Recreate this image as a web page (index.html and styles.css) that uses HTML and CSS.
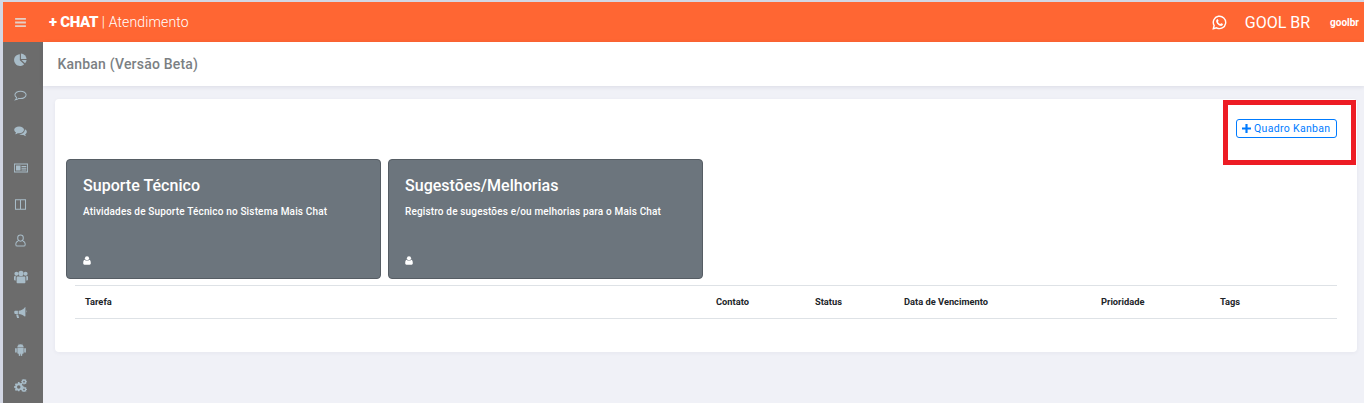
FILE: index.html
```html
<!DOCTYPE html>
<html lang="pt-BR">
<head>
<meta charset="utf-8">
<title>Kanban</title>
<link rel="stylesheet" href="styles.css">
</head>
<body>
<div class="app">
  <header class="topbar">
    <div class="burger-cell">
      <svg class="burger" viewBox="0 0 12 10"><path d="M0 0h12v2H0zM0 4h12v2H0zM0 8h12v2H0z"/></svg>
    </div>
    <div class="brand"><b class="brand-strong">+ CHAT</b> <span class="brand-sep">|</span> Atendimento</div>
    <div class="top-right">
      <svg class="wa" viewBox="0 0 16 16"><path fill="none" stroke="currentColor" stroke-width="1.5" d="M1.4 14.6l.9-3.4A6.6 6.6 0 1 1 4.9 13.7z"/><path fill="currentColor" d="M5.7 4.3c.3 0 .6 0 .7.4l.6 1.3c0 .2 0 .4-.5 1-.2.2-.2.4 0 .6.5.9 1.100 1.500 2 1.900.2.100.4.100.6-.1.500-.600.600-.700.900-.600l1.300.6c.3.200.4.300.3.700-.1.800-1 1.500-1.900 1.500-2.500-.2-5.100-2.700-5.300-5 0-.900.400-2 1.300-2.200z"/></svg>
      <span class="org">GOOL BR</span>
      <span class="user">goolbr</span>
    </div>
  </header>
  <div class="body-row">
    <nav class="sidebar">
      <svg class="ico" viewBox="0 0 14 14"><path d="M6.300 1.300v6.400l4.600 4.300A6.300 6.300 0 1 1 6.300 1.300z"/><path d="M7.500 0.500a6.300 6.300 0 0 1 6 6H7.500z"/><path d="M8 7.500h5.600a6 6 0 0 1-1.700 3.600z"/></svg>
      <svg class="ico" viewBox="0 0 14 14"><path fill="none" stroke="currentColor" stroke-width="1.100" d="M7 2.300c3.300 0 6 1.800 6 4s-2.700 4-6 4c-.7 0-1.300 0-1.900-.2-.9.8-2.200 1.400-3.600 1.500.7-.7 1.200-1.500 1.300-2.400C1.700 8.500 1 7.500 1 6.300c0-2.200 2.700-4 6-4z"/></svg>
      <svg class="ico" viewBox="0 0 14 14"><path d="M5.500 1.500c3 0 5.300 1.600 5.300 3.700S8.500 8.900 5.500 8.900c-.5 0-1 0-1.500-.1-.8.600-1.800 1-3 1.200.6-.6 1-1.200 1.200-1.900C1 7.400.2 6.400.2 5.200.2 3.100 2.500 1.500 5.500 1.500z"/><path d="M11.700 4.600c1.300.6 2.100 1.600 2.100 2.800 0 1.100-.7 2-1.800 2.700.2.700.6 1.300 1.200 1.900-1.200-.2-2.200-.6-3-1.200-1.700.3-3.500-.1-4.600-1 3.400 0 6.200-1.800 6.100-5.200z"/></svg>
      <svg class="ico ico-wide" viewBox="0 0 14 14"><path fill-rule="evenodd" d="M0 2.500h14v9H0zM.9 3.400v7.200h12.200V3.400z"/><path d="M2 4.500h4.500v5H2zM7.500 5h4.800v1H7.500zM7.500 6.700h4.800v1H7.500zM7.500 8.400h4.800v1H7.500z"/></svg>
      <svg class="ico" viewBox="0 0 14 14"><path fill="none" stroke="currentColor" stroke-width="1.100" d="M1.600 1.800h10.800v10.400H1.600zM7 1.800v10.400"/></svg>
      <svg class="ico" viewBox="0 0 14 14"><path fill="none" stroke="currentColor" stroke-width="1.100" d="M7 1.100a3 3 0 0 1 3 3v.6a3 3 0 0 1-6 0v-.6a3 3 0 0 1 3-3zM4.500 7.500C3 8 2 9 2 10.500v1a1.500 1.500 0 0 0 1.500 1.500h7a1.500 1.500 0 0 0 1.500-1.500v-1c0-1.500-1-2.500-2.500-3"/></svg>
      <svg class="ico ico-wide" viewBox="0 0 14 14"><circle cx="7" cy="3.400" r="2.600"/><circle cx="2.400" cy="3.700" r="2"/><circle cx="11.600" cy="3.700" r="2"/><path d="M3.800 6.400h6.400c.8 0 1.200.5 1.200 1.200v4.600c0 .7-.4 1.100-1.200 1.100H3.800c-.8 0-1.200-.4-1.200-1.100V7.600c0-.7.400-1.200 1.200-1.200zM0 6.300h2.300c-.4.500-.6 1-.6 1.500v2.600H.8c-.5 0-.8-.3-.8-.8zM14 6.300h-2.300c.4.500.6 1 .6 1.500v2.600h.9c.5 0 .8-.3.800-.8z"/></svg>
      <svg class="ico" viewBox="0 0 14 14"><path d="M12.300 1.200v9.900l-.8.300C9.700 9.600 7.600 8.800 5 8.700V5c2.600-.2 4.800-1.200 6.500-3.500zM13 4.600c.7.400.7 1.900 0 2.300zM1.200 5.100H4.200v3.500H1.200C.6 8.600.3 8.100.3 7.600V6.100c0-.6.300-1 .9-1zM2.300 9.100h2.200l1 3.800H3.300z"/></svg>
      <svg class="ico" viewBox="0 0 14 14"><path d="M3.600 4.800h6.800c0-1.300-.6-2.300-1.600-2.900l.6-1-.3-.2-.6 1a4 4 0 0 0-3 0l-.6-1-.3.200.6 1c-1 .6-1.600 1.600-1.600 2.900zM3.600 5.400h6.800v5.300c0 .5-.3.800-.8.800h-.7v1.700a.8.800 0 0 1-1.600 0v-1.700H6.700v1.700a.8.800 0 0 1-1.600 0v-1.700h-.7c-.5 0-.8-.3-.8-.8zM2.100 5.400c.5 0 .9.400.9.900v3.200a.9.900 0 0 1-1.800 0V6.300c0-.5.400-.9.900-.9zM11.900 5.400c.5 0 .9.400.9.900v3.200a.9.900 0 0 1-1.800 0V6.300c0-.5.400-.9.900-.9z"/></svg>
      <svg class="ico" viewBox="0 0 14 14"><path fill-rule="evenodd" d="M4.300 3.200h1.600l.3 1.200.8.300 1.100-.6 1.100 1.100-.6 1.100.3.800 1.200.3v1.600l-1.200.3-.3.800.6 1.100-1.100 1.100-1.100-.6-.8.3-.3 1.200H4.300L4 12.500l-.8-.3-1.100.6L1 11.700l.6-1.100-.3-.8-1.200-.3V7.900l1.200-.3.3-.8L1 5.700l1.100-1.100 1.100.6.800-.3zM5.100 6.800a1.900 1.900 0 1 0 0 3.800 1.900 1.900 0 0 0 0-3.800z"/><path fill-rule="evenodd" d="M11.200 0l.3.800.6.100.6-.5.7.6-.4.700.2.600.8.200v.9l-.8.200-.2.600.4.700-.7.600-.6-.5-.6.100-.3.800h-.9l-.2-.8-.6-.2-.6.400-.7-.6.400-.7-.2-.6-.8-.2V2.500l.8-.2.200-.6-.4-.7.700-.6.600.4.600-.2.200-.6zM10.800 2a.9.900 0 1 0 0 1.800.9.900 0 0 0 0-1.800z"/><path fill-rule="evenodd" d="M11.200 8.300l.3.800.6.100.6-.5.7.6-.4.700.2.600.8.200v.9l-.8.200-.2.600.4.700-.7.600-.6-.5-.6.100-.3.800h-.9l-.2-.8-.6-.2-.6.400-.7-.6.400-.7-.2-.6-.8-.2v-.9l.8-.2.200-.6-.4-.7.700-.6.600.4.600-.2.200-.6zm-.4 2a.9.900 0 1 0 0 1.800.9.900 0 0 0 0-1.800z"/></svg>
    </nav>
    <main class="main">
      <div class="page-title"><h1 class="page-heading">Kanban (Versão Beta)</h1></div>
      <section class="panel">
        <div class="toolbar">
          <button class="btn-add" type="button"><svg class="plus" viewBox="0 0 10 10"><path d="M3.800 0h2.400v3.800H10v2.400H6.200V10H3.800V6.200H0V3.800h3.800z"/></svg>Quadro Kanban</button>
        </div>
        <div class="boards">
          <article class="board">
            <h2 class="board-title">Suporte Técnico</h2>
            <p class="board-desc">Atividades de Suporte Técnico no Sistema Mais Chat</p>
            <svg class="board-user" viewBox="0 0 10 11"><circle cx="5" cy="2.800" r="2.600"/><path d="M2 4.700c.7.800 1.800 1.200 3 1.200s2.300-.4 3-1.200c1 .4 1.700 1.500 1.700 3.300v1.300c0 .8-.6 1.400-1.400 1.400H1.700C.9 10.700.300 10.100.300 9.300V8c0-1.800.7-2.900 1.700-3.300z"/></svg>
          </article>
          <article class="board">
            <h2 class="board-title">Sugestões/Melhorias</h2>
            <p class="board-desc">Registro de sugestões e/ou melhorias para o Mais Chat</p>
            <svg class="board-user" viewBox="0 0 10 11"><circle cx="5" cy="2.800" r="2.600"/><path d="M2 4.700c.7.800 1.800 1.200 3 1.200s2.300-.4 3-1.200c1 .4 1.700 1.500 1.700 3.300v1.300c0 .8-.6 1.400-1.400 1.400H1.700C.9 10.700.300 10.100.300 9.300V8c0-1.800.7-2.900 1.700-3.300z"/></svg>
          </article>
        </div>
        <div class="task-head">
          <span>Tarefa</span><span>Contato</span><span>Status</span><span>Data de Vencimento</span><span>Prioridade</span><span>Tags</span>
        </div>
        <div class="annotation"></div>
      </section>
    </main>
  </div>
</div>
</body>
</html>
```
FILE: styles.css
```css
* { box-sizing: border-box; }
html, body { margin: 0; height: 100%; overflow: hidden; }
body {
  background: #d3d7e4;
  font-family: Roboto, "Liberation Sans", sans-serif;
  padding: 2px 0 0 3px;
}
.app { display: flex; flex-direction: column; height: 401px; }
.topbar {
  display: flex;
  align-items: center;
  height: 40px;
  flex: none;
  background: #ff6633;
  color: #fff;
}
.burger-cell { width: 40px; display: flex; justify-content: center; flex: none; padding-right: 5px; }
.burger { width: 11px; height: 9px; fill: #e6cfc6; }
.brand { margin-left: 6px; font-size: 14px; font-weight: 300; letter-spacing: 0.15px; white-space: pre; }
.brand-strong { font-size: 15px; font-weight: 900; letter-spacing: -0.3px; }
.brand-sep { font-weight: 300; }
.top-right { margin-left: auto; display: flex; align-items: center; padding-right: 5px; }
.wa { width: 15px; height: 15px; color: #fff; margin-right: 18px; }
.org { font-size: 16px; font-weight: 400; margin-right: 20px; }
.user { font-size: 10px; font-weight: 700; }
.body-row { display: flex; flex: 1; min-height: 0; }
.sidebar {
  width: 40px;
  flex: none;
  background: #6c6c6c;
  display: flex;
  flex-direction: column;
  align-items: center;
  padding: 11px 5px 0 0;
  gap: 23.2px;
  overflow: hidden;
  color: #a8bcc8;
}
.ico { width: 13px; height: 13px; flex: none; fill: #a8bcc8; }
.ico-wide { width: 14px; height: 14px; margin: -0.5px 0; }
.main { flex: 1; min-width: 0; background: #f0f1f7; display: flex; flex-direction: column; }
.page-title {
  height: 44px;
  flex: none;
  background: #fff;
  box-shadow: 0 1px 4px rgba(40, 40, 80, 0.1);
  display: flex;
  align-items: center;
  padding-left: 14.5px;
}
.page-heading { margin: 0; font-size: 14px; font-weight: 500; color: #7b7f83; letter-spacing: 0.2px; }
.panel {
  position: relative;
  margin: 13px 7px 0 12px;
  height: 253px;
  background: #fff;
  border-radius: 4px;
  box-shadow: 0 1px 4px rgba(40, 40, 80, 0.05);
  padding: 0 20px 0 11px;
}
.toolbar { display: flex; justify-content: flex-end; padding-top: 20px; height: 60px; }
.btn-add {
  display: flex;
  align-items: center;
  height: 19px;
  width: 101px;
  padding: 0 0 0 5px;
  background: #fff;
  border: 1px solid #007bff;
  border-radius: 3px;
  color: #007bff;
  font: 400 10.5px Roboto, sans-serif;
  letter-spacing: 0.33px;
  white-space: nowrap;
}
.plus { width: 9px; height: 9px; fill: #007bff; margin-right: 3px; flex: none; }
.boards { display: flex; gap: 7px; }
.board {
  width: 315px;
  height: 120px;
  background: #6c757d;
  border: 1px solid #565d64;
  border-radius: 4px;
  color: #fff;
  padding: 16px 16px 0;
  position: relative;
  display: flex;
  flex-direction: column;
}
.board-title { margin: 0; font-size: 16px; font-weight: 500; line-height: 20px; letter-spacing: 0.03px; }
.board-desc { margin: 10px 0 0; font-size: 10px; font-weight: 500; line-height: 12px; letter-spacing: 0.16px; }
.board-user { width: 8px; height: 9px; fill: #fff; margin-top: auto; margin-bottom: 13px; }
.task-head {
  display: grid;
  grid-template-columns: 631px 99px 89px 197px 119px 127px;
  align-items: center;
  margin: 6px 0 0 9px;
  height: 34px;
  padding-bottom: 1px;
  border-top: 1px solid #dee2e6;
  border-bottom: 1px solid #dee2e6;
  font-size: 9.3px;
  font-weight: 700;
  color: #212529;
}
.task-head span { padding-left: 10px; }
.annotation {
  position: absolute;
  left: 1168px;
  top: 1px;
  width: 133px;
  height: 65px;
  border: 5px solid #ed1c24;
  pointer-events: none;
}
```
